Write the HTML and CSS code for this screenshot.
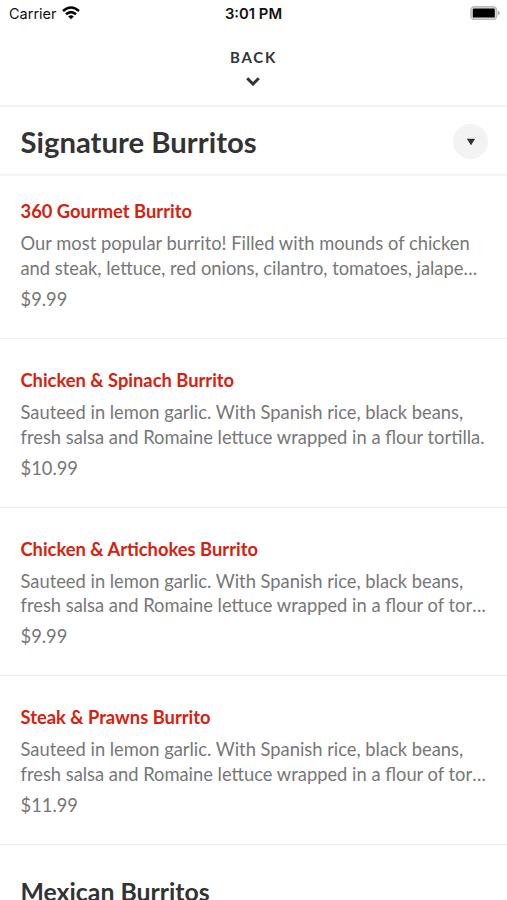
FILE: index.html
```html
<!DOCTYPE html>
<html lang="en">
<head>
<meta charset="utf-8">
<title>Menu</title>
<link rel="stylesheet" href="styles.css">
</head>
<body>
<div class="screen">
  <div class="status">
    <div class="carrier"><span>Carrier</span>
      <svg class="wifi" width="18" height="14" viewBox="0 0 18 14"><g fill="none" stroke="#000" stroke-width="2.5"><path d="M1 5Q9-2 17 5"/><path d="M4 8.3Q9 4 14 8.3"/></g><path d="M9 13.2L6.2 10.4Q9 8.3 11.8 10.4Z"/></svg>
    </div>
    <div class="time">3:01 PM</div>
    <svg class="battery" width="30" height="14" viewBox="0 0 30 14"><rect x="1" y=".8" width="25.6" height="12.6" rx="3.4" fill="#ddd" stroke="#bbb" stroke-width="1.5"/><rect x="2.8" y="2.6" width="22" height="9" rx="1.2"/><path d="M28 4.8Q30 5.6 30 7T28 9.2Z" fill="#aaa"/></svg>
  </div>
  <header class="back"><span>BACK</span>
    <svg width="14" height="9" viewBox="0 0 14 9"><path d="M1.2 1.3L7 7L12.8 1.3" fill="none" stroke="#333" stroke-width="3"/></svg>
  </header>
  <div class="heading"><h1>Signature Burritos</h1>
    <button class="toggle" aria-label="Choose section"><svg width="10" height="8" viewBox="0 0 10 8"><path d="M.8.8H9.2L5 7.2Z" fill="#333"/></svg></button>
  </div>
  <article class="item"><h2>360 Gourmet Burrito</h2><p>Our most popular burrito! Filled with mounds of chicken<br>and steak, lettuce, red onions, cilantro, tomatoes, jalape<span class="dots">...</span></p><div class="price">$9.99</div></article>
  <article class="item"><h2>Chicken &amp; Spinach Burrito</h2><p>Sauteed in lemon garlic. With Spanish rice, black beans,<br>fresh salsa and Romaine lettuce wrapped in a flour tortilla.</p><div class="price">$10.99</div></article>
  <article class="item"><h2>Chicken &amp; Artichokes Burrito</h2><p>Sauteed in lemon garlic. With Spanish rice, black beans,<br>fresh salsa and Romaine lettuce wrapped in a flour of tor<span class="dots">...</span></p><div class="price">$9.99</div></article>
  <article class="item"><h2>Steak &amp; Prawns Burrito</h2><p>Sauteed in lemon garlic. With Spanish rice, black beans,<br>fresh salsa and Romaine lettuce wrapped in a flour of tor<span class="dots">...</span></p><div class="price">$11.99</div></article>
  <h3 class="next">Mexican Burritos</h3>
</div>
</body>
</html>
```
FILE: styles.css
```css
* { box-sizing: border-box; }
body { margin: 0; background: #fff; font-family: Lato, sans-serif; color: #333; }
h1, h2, h3, p { margin: 0; }
svg { display: block; }
.screen { width: 507px; height: 900px; overflow: hidden; }
.status { height: 28px; display: grid; grid-template-columns: 1fr auto 1fr; align-items: center; padding: 0 7px 0 9px; font: 14.5px/28px Inter, sans-serif; color: #111; }
.carrier { display: flex; align-items: center; gap: 5px; }
.carrier svg { margin-top: -2px; }
.time { font-weight: 600; font-size: 14.8px; margin-right: 2px; }
.battery { justify-self: end; margin-top: -2px; }
.back { height: 79px; display: flex; flex-direction: column; align-items: center; padding: 19px 0 0; border-bottom: 2px solid #f4f4f4; font-size: 15px; line-height: 20px; font-weight: 700; letter-spacing: 1.7px; }
.back svg { margin: 10px 1px 0 0; }
.heading { height: 69px; display: flex; align-items: center; justify-content: space-between; padding: 2px 19px 0 20.5px; border-bottom: 2px solid #f4f4f4; }
h1 { font-size: 29.3px; line-height: 36px; font-weight: 700; }
.toggle { width: 35px; height: 35px; border: 0; border-radius: 50%; background: #f3f3f3; padding: 0; display: grid; place-items: center; }
.item { height: 168.6px; padding: 29px 18px 0 20.5px; border-bottom: 1px solid #eee; font-size: 18.33px; line-height: 24.6px; color: #777; white-space: nowrap; }
.heading + .item { height: 163px; padding-top: 23.4px; }
.item h2 { font-size: 18.33px; line-height: 25px; font-weight: 700; color: #d9200d; }
.item p { margin-top: 7px; }
.dots { letter-spacing: .4px; }
.price { margin-top: 6.5px; }
.next { padding: 31px 20.5px 0; font-size: 24.8px; line-height: 32px; }
```
